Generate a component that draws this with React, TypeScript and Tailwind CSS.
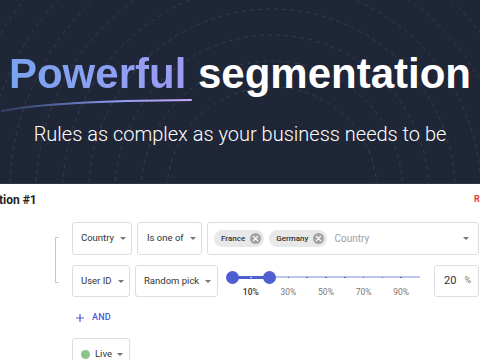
import React from "react";

const Caret = () => (
  <svg width="6" height="3" viewBox="0 0 6 3" className="shrink-0">
    <path d="M0 0h6L3 3z" fill="#757575" />
  </svg>
);

const ChipX = () => (
  <svg width="11" height="11" viewBox="0 0 11 11" className="shrink-0">
    <circle cx="5.5" cy="5.5" r="5.5" fill="#a3a3a3" />
    <path d="M3.4 3.4l4.2 4.2M7.6 3.4l-4.2 4.2" stroke="#fff" strokeWidth="1.3" strokeLinecap="round" />
  </svg>
);

const Box = ({ className, children }: { className: string; children: React.ReactNode }) => (
  <div className={`flex items-center shrink-0 whitespace-nowrap border border-[#dedede] rounded-[3px] bg-white text-[9.5px] text-[#333] ${className}`}>
    {children}
  </div>
);

const Chip = ({ label }: { label: string }) => (
  <div className="flex items-center h-[17px] rounded-full bg-[#e8e8e8] pl-[7px] pr-[3px] gap-[5px]">
    <span className="text-[8px] font-medium text-[#333]">{label}</span>
    <ChipX />
  </div>
);

const Slider = () => {
  const step = 18.8;
  const ticks = [1, 2, 3, 4, 5, 6, 7, 8, 9];
  const labels = [1, 3, 5, 7, 9];
  return (
    <div className="relative w-[200px] h-[32px] ml-[8px] shrink-0">
      <div className="absolute left-[6px] right-[6px] top-[11px] h-[2px] bg-[#bcc3ef]" />
      <div className="absolute left-[6px] w-[37px] top-[10.5px] h-[3px] bg-[#4d5fd1]" />
      {ticks.map((t) => (
        <div
          key={t}
          className={`absolute top-[11.5px] w-[1.5px] h-[1px] ${t < 2 ? "bg-[#c9cff5]" : "bg-[#4d5fd1]"}`}
          style={{ left: 6 + t * step - 0.75 }}
        />
      ))}
      <div className="absolute left-0 top-[5.5px] w-[13px] h-[13px] rounded-full bg-[#4d5fd1]" />
      <div className="absolute left-[37px] top-[5.5px] w-[13px] h-[13px] rounded-full bg-[#4d5fd1]" />
      {labels.map((l) => (
        <span
          key={l}
          className={`absolute top-[22px] w-[24px] -ml-[12px] text-center text-[8.5px] leading-[10px] ${l === 1 ? "text-[#333] font-medium" : "text-[#777]"}`}
          style={{ left: 6 + l * step }}
        >
          {l * 10}%
        </span>
      ))}
    </div>
  );
};

export default function App() {
  const radii = [105, 131, 157, 183, 209, 236, 262, 288, 314];
  return (
    <div className="w-[480px] h-[360px] overflow-hidden bg-white" style={{ fontFamily: "Roboto, 'Noto Sans', sans-serif" }}>
      <div className="relative h-[184px] bg-[#1f2637] overflow-hidden border-b border-[#2c3446]">
        <svg className="absolute inset-0" width="480" height="184">
          {radii.map((r) => (
            <circle key={r} cx="272" cy="192" r={r} fill="none" stroke="rgba(255,255,255,0.1)" strokeWidth="1" strokeDasharray="4 4" />
          ))}
        </svg>
        <div className="relative flex flex-col items-center pt-[53px]">
          <h1 className="text-[42px] leading-none font-bold whitespace-nowrap" style={{ fontFamily: "'Liberation Sans', Arial, sans-serif" }}>
            <span className="relative">
              <span className="bg-gradient-to-r from-[#78a4ef] to-[#9b9cf3] bg-clip-text text-transparent">Powerful</span>
              <svg className="absolute left-[-8px] top-[46px]" width="196" height="18" viewBox="0 0 196 18">
                <defs>
                  <linearGradient id="sw" x1="0" x2="1" y1="0" y2="0">
                    <stop offset="0" stopColor="#5a76c4" stopOpacity="0.3" />
                    <stop offset="0.6" stopColor="#8f9cf0" />
                    <stop offset="1" stopColor="#c7a9ff" />
                  </linearGradient>
                </defs>
                <path d="M1 15 Q 50 5 190 4" fill="none" stroke="url(#sw)" strokeWidth="2" strokeLinecap="round" />
              </svg>
            </span>
            <span className="text-white"> segmentation</span>
          </h1>
          <p className="mt-[29px] text-[20px] leading-none font-light text-white whitespace-nowrap">
            Rules as complex as your business needs to be
          </p>
        </div>
      </div>

      <div className="flex items-center justify-between h-[32px]">
        <span className="ml-[-29px] text-[12px] font-bold text-[#222] whitespace-nowrap">Variation #1</span>
        <span className="mr-[-40px] w-[46px] text-[9px] font-bold text-[#e53935] tracking-wide">REMOVE</span>
      </div>

      <div className="flex mt-[6px]">
        <div className="w-[72px] shrink-0 pl-[55px] pt-[15px]">
          <div className="w-[4px] h-[46px] border-l border-y border-[#c9c9c9]" />
        </div>
        <div className="flex flex-col">
          <div className="flex gap-[5px] h-[33px]">
            <Box className="w-[60px] pl-[8px] gap-[6px]">
              <span>Country</span>
              <Caret />
            </Box>
            <Box className="w-[65px] pl-[9px] gap-[6px]">
              <span>Is one of</span>
              <Caret />
            </Box>
            <Box className="w-[272px] pl-[6px]">
              <div className="flex items-center gap-[5px]">
                <Chip label="France" />
                <Chip label="Germany" />
              </div>
              <span className="ml-[7px] text-[10px] text-[#9e9e9e]">Country</span>
              <div className="ml-auto mr-[9px]">
                <Caret />
              </div>
            </Box>
          </div>
          <div className="flex mt-[10px] h-[32px]">
            <Box className="w-[58px] pl-[8px] gap-[6px]">
              <span>User ID</span>
              <Caret />
            </Box>
            <Box className="w-[83px] ml-[5px] pl-[8px] gap-[6px]">
              <span>Random pick</span>
              <Caret />
            </Box>
            <Slider />
            <Box className="w-[45px] ml-[8px] pl-[9px] gap-[8px]">
              <span className="text-[11px]">20</span>
              <span className="text-[9px] text-[#777]">%</span>
            </Box>
          </div>
          <div className="flex items-center h-[14px] mt-[14px] pl-[4px] gap-[8px] text-[#4a5bd4]">
            <svg width="8" height="8" viewBox="0 0 8 8">
              <path d="M4 0v8M0 4h8" stroke="#4a5bd4" strokeWidth="1.2" />
            </svg>
            <span className="text-[9px] font-medium tracking-wide">AND</span>
          </div>
          <Box className="w-[58px] h-[33px] mt-[13px] pl-[8px] gap-[5px]">
            <span className="w-[9px] h-[9px] rounded-full bg-[#8bc58a]" />
            <span>Live</span>
            <Caret />
          </Box>
        </div>
      </div>
    </div>
  );
}
